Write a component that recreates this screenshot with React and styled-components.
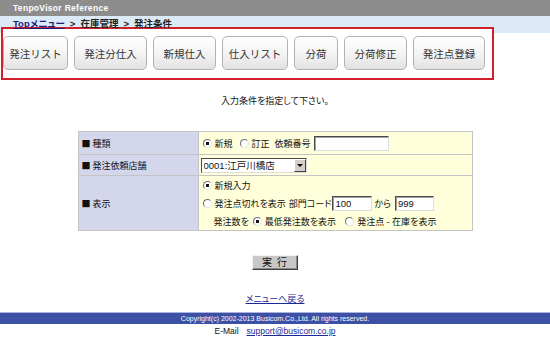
import React from "react";
import styled, { createGlobalStyle } from "styled-components";

const GlobalStyle = createGlobalStyle`
  body {
    margin: 0;
    background: #fff;
    font-family: "Liberation Sans", "Noto Sans CJK JP", sans-serif;
    font-feature-settings: "palt";
    color: #111;
  }
`;

const Page = styled.div`
  width: 550px;
  height: 343px;
  overflow: hidden;
`;

const TitleBar = styled.div`
  height: 16px;
  background: #8d8d8d;
  color: #fff;
  font-weight: bold;
  font-size: 8.5px;
  line-height: 16px;
  padding-left: 13px;
  letter-spacing: 0.3px;
`;

const Crumbs = styled.div`
  height: 17px;
  box-sizing: border-box;
  padding: 3px 0 0 13px;
  background: #dce9f6;
  display: flex;
  gap: 5px;
  font-size: 9.5px;
  font-weight: bold;
  line-height: 10px;
  color: #222;
`;

const CrumbLink = styled.a`
  color: #1c1c7c;
  text-decoration: underline;
`;

const MenuBox = styled.nav`
  margin: -6px 0 0 1px;
  width: 493px;
  box-sizing: border-box;
  border: 2px solid #d0202a;
  background: #fff;
  padding: 7px 0 8px 0;
  display: flex;
  gap: 6px;
`;

const MenuButton = styled.button`
  width: ${(p) => p.$w}px;
  height: 34px;
  padding: 0;
  border: 1px solid #b2b2b2;
  border-radius: 5px;
  background: linear-gradient(#ffffff, #f4f4f4 50%, #e2e2e2);
  font-family: inherit;
  font-size: 10.5px;
  color: #333;
`;

const Note = styled.p`
  margin: 16px 0 0;
  text-align: center;
  font-size: 9px;
  line-height: 10px;
`;

const Form = styled.table`
  margin: 25px auto 0;
  width: 395px;
  border-collapse: collapse;
  border: 1px solid #9c9c9c;
  font-size: 9px;
`;

const Row = styled.tr`
  height: ${(p) => p.$h}px;
`;

const Label = styled.th`
  width: 116px;
  padding: 0 0 0 3px;
  background: #d4d7ec;
  border: 1px solid #c4c4c4;
  text-align: left;
  font-weight: normal;
`;

const Bullet = styled.span`
  font-family: "Noto Sans CJK JP", sans-serif;
  font-feature-settings: normal;
  margin-right: 2px;
`;

const Cell = styled.td`
  padding: ${(p) => p.$pad || "0 0 0 4px"};
  background: #ffffdc;
  border: 1px solid #c4c4c4;
  vertical-align: middle;
`;

const Lines = styled.div`
  display: flex;
  flex-direction: column;
  gap: 2px;
`;

const Line = styled.div`
  display: flex;
  align-items: center;
  height: 16px;
  padding-left: ${(p) => p.$indent || 0}px;
  white-space: nowrap;
`;

const Opt = styled.label`
  display: inline-flex;
  align-items: center;
  margin-right: ${(p) => p.$mr || 0}px;
`;

const Gap = styled.span`
  display: inline-block;
  width: ${(p) => p.$w}px;
`;

const Radio = styled.input.attrs({ type: "radio" })`
  appearance: none;
  margin: 0 3px 0 0;
  width: 9px;
  height: 9px;
  box-sizing: border-box;
  border-radius: 50%;
  border: 1px solid;
  border-color: #6f6f6f #e4e4e4 #e4e4e4 #6f6f6f;
  background: #fff;
  &:checked {
    background: radial-gradient(circle, #111 0 1.4px, #fff 1.9px);
  }
`;

const TextField = styled.input`
  width: ${(p) => p.$w}px;
  height: 15px;
  box-sizing: border-box;
  margin: 0 0 0 ${(p) => p.$ml || 0}px;
  padding: 0 2px;
  border: 1px solid;
  border-color: #4a4a4a #dcdcdc #dcdcdc #4a4a4a;
  box-shadow: inset 1px 1px 0 #a0a0a0;
  background: #fff;
  font: inherit;
  font-size: 9.5px;
  color: #111;
`;

const SelectWrap = styled.div`
  display: flex;
  align-items: center;
  width: 106px;
  height: 15px;
  box-sizing: border-box;
  margin-left: -1px;
  border: 1px solid;
  border-color: #4a4a4a #dcdcdc #dcdcdc #4a4a4a;
  background: #fff;
`;

const Select = styled.select`
  appearance: none;
  flex: 1;
  min-width: 0;
  height: 100%;
  padding: 0 2px;
  border: none;
  background: transparent;
  font: inherit;
  font-size: 9.5px;
  color: #111;
  outline: none;
`;

const Arrow = styled.span`
  width: 12px;
  height: 100%;
  box-sizing: border-box;
  display: flex;
  align-items: center;
  justify-content: center;
  background: #d4d0c8;
  border: 1px solid;
  border-color: #fff #404040 #404040 #fff;
  &::after {
    content: "";
    border-left: 3px solid transparent;
    border-right: 3px solid transparent;
    border-top: 3px solid #000;
  }
`;

const Submit = styled.button`
  display: block;
  margin: 24px auto 0;
  width: 46px;
  height: 15px;
  padding: 0;
  background: #c8c8c8;
  border: 1px solid;
  border-color: #f4f4f4 #404040 #404040 #f4f4f4;
  box-shadow: inset -1px -1px 0 #8a8a8a;
  font: inherit;
  font-size: 10px;
  line-height: 12px;
  letter-spacing: 1px;
  color: #111;
`;

const Back = styled.a`
  display: block;
  width: fit-content;
  margin: 24px auto 0;
  font-size: 9px;
  line-height: 10px;
  color: #1a2a99;
  text-decoration: underline;
`;

const Copy = styled.div`
  margin-top: 8px;
  height: 11px;
  background: #3c50a6;
  border-top: 1px solid #a9b3dc;
  color: #fff;
  font-size: 7px;
  line-height: 11px;
  text-align: center;
`;

const Contact = styled.div`
  display: flex;
  justify-content: center;
  gap: 8px;
  font-size: 8.5px;
  line-height: 14px;
`;

const Mail = styled.a`
  color: #1a2a99;
  text-decoration: underline;
`;

const menus = [
  ["発注リスト", 65],
  ["発注分仕入", 73],
  ["新規仕入", 63],
  ["仕入リスト", 66],
  ["分荷", 44],
  ["分荷修正", 63],
  ["発注点登録", 72],
];

export default function App() {
  return (
    <Page>
      <GlobalStyle />
      <TitleBar>TenpoVisor Reference</TitleBar>
      <Crumbs>
        <CrumbLink>Topメニュー</CrumbLink>
        <span>&gt;</span>
        <span>在庫管理</span>
        <span>&gt;</span>
        <span>発注条件</span>
      </Crumbs>
      <MenuBox>
        {menus.map(([t, w]) => (
          <MenuButton key={t} $w={w}>
            {t}
          </MenuButton>
        ))}
      </MenuBox>

      <Note>入力条件を指定して下さい。</Note>

      <Form>
        <tbody>
          <Row $h={23}>
            <Label>
              <Bullet>■</Bullet>種類
            </Label>
            <Cell>
              <Line>
                <Opt $mr={7}>
                  <Radio name="kind" defaultChecked />
                  新規
                </Opt>
                <Opt $mr={5}>
                  <Radio name="kind" />
                  訂正
                </Opt>
                依頼番号
                <TextField $w={75} $ml={3} />
              </Line>
            </Cell>
          </Row>
          <Row $h={21}>
            <Label>
              <Bullet>■</Bullet>発注依頼店舗
            </Label>
            <Cell $pad="0 0 0 3px">
              <SelectWrap>
                <Select defaultValue="0001">
                  <option value="0001">0001:江戸川橋店</option>
                </Select>
                <Arrow />
              </SelectWrap>
            </Cell>
          </Row>
          <Row $h={55}>
            <Label>
              <Bullet>■</Bullet>表示
            </Label>
            <Cell $pad="1px 0 1px 4px">
              <Lines>
                <Line>
                  <Opt>
                    <Radio name="view" defaultChecked />
                    新規入力
                  </Opt>
                </Line>
                <Line>
                  <Opt $mr={3}>
                    <Radio name="view" />
                    発注点切れを表示
                  </Opt>
                  部門コード
                  <TextField $w={40} $ml={1} defaultValue="100" />
                  <Gap $w={2} />
                  から
                  <TextField $w={39} $ml={4} defaultValue="999" />
                </Line>
                <Line $indent={11}>
                  発注数を
                  <Gap $w={4} />
                  <Opt $mr={9}>
                    <Radio name="qty" defaultChecked />
                    最低発注数を表示
                  </Opt>
                  <Opt>
                    <Radio name="qty" />
                    発注点 - 在庫を表示
                  </Opt>
                </Line>
              </Lines>
            </Cell>
          </Row>
        </tbody>
      </Form>

      <Submit>実 行</Submit>
      <Back>メニューへ戻る</Back>

      <Copy>Copyright(c) 2002-2013 Busicom.Co.,Ltd. All rights reserved.</Copy>
      <Contact>
        <span>E-Mail</span>
        <Mail>support@busicom.co.jp</Mail>
      </Contact>
    </Page>
  );
}
